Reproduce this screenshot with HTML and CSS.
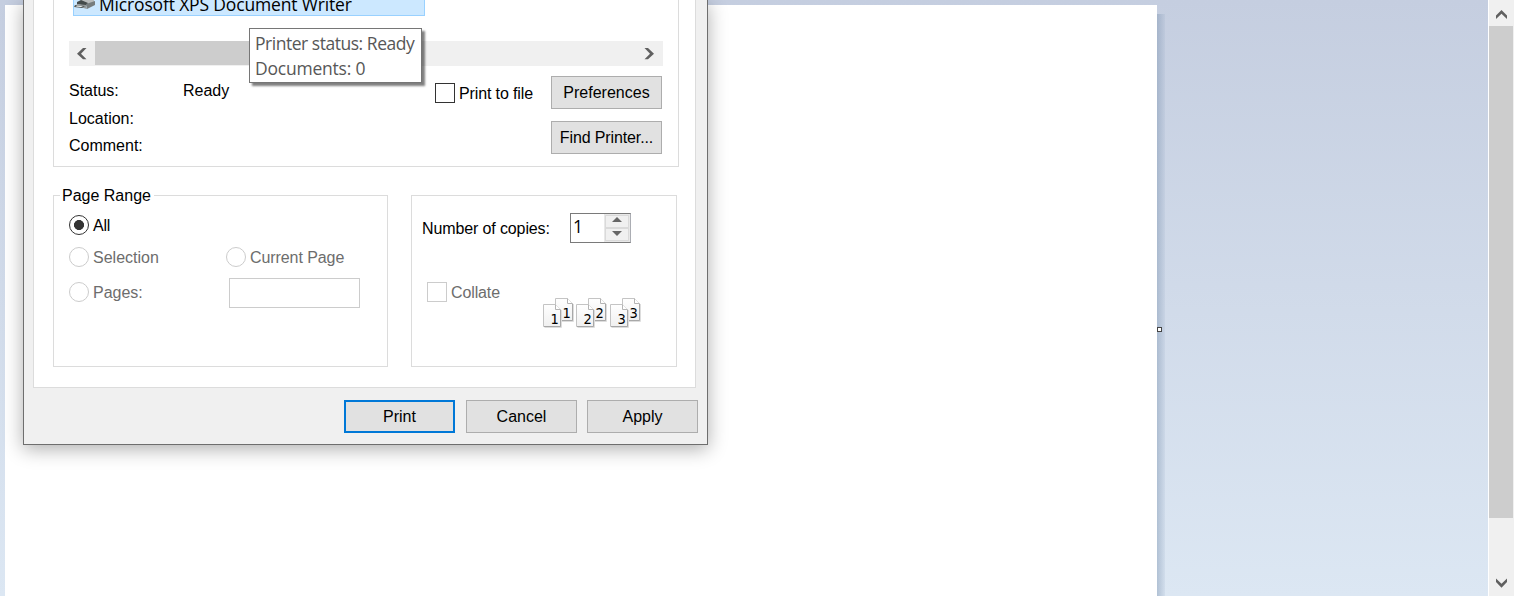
FILE: index.html
```html
<!DOCTYPE html>
<html lang="en">
<head>
<meta charset="utf-8">
<title>Print</title>
<link rel="stylesheet" href="styles.css">
</head>
<body>
<div class="app">
  <main class="workspace">
    <div class="paper"></div>
    <div class="paper-shadow"></div>
    <span class="handle"></span>
  </main>
  <div class="vscroll">
    <svg class="vscroll-btn" viewBox="0 0 24 26"><path d="M7 19v-3.500l5.500-5.500 5.500 5.500v3.500l-5.500-5.300z" fill="#606060"/></svg>
    <div class="vscroll-thumb"></div>
    <svg class="vscroll-btn vscroll-down" viewBox="0 0 24 26"><path d="M7 8.500v3.500l5.500 5.700 5.500-5.700v-3.500l-5.500 5.300z" fill="#606060"/></svg>
  </div>

  <section class="dialog">
    <div class="panel">
      <div class="group printer-group">
        <div class="list-item">
          <svg class="printer-icon" viewBox="0 0 22 12" width="22" height="12">
            <path d="M7 0H20V2L13 4 6 2Z" fill="#b9bcbc"/>
            <path d="M3 2 7 0 14 3 12 6 3 4Z" fill="#454b4b"/>
            <path d="M12 4 21 1V5L13 9Z" fill="#777d7e"/>
            <path d="M3 4 12 5 13 9 2 6Z" fill="#969b9c"/>
            <path d="M1 5 11 6 8 8 0 7Z" fill="#555b5b"/>
            <path d="M3 5.500 9 6 7 7 2 6.500Z" fill="#f1f4f4"/>
          </svg>
          <span class="item-name">Microsoft XPS Document Writer</span>
        </div>
        <div class="hscroll">
          <svg class="hscroll-btn" viewBox="0 0 26 25"><path d="M17.500 7H14l-6 5.700 6 5.500h3.500L12 12.700z" fill="#606060"/></svg>
          <div class="hscroll-thumb"></div>
          <svg class="hscroll-btn hscroll-right" viewBox="0 0 26 25"><path d="M7.500 7H11l6 5.700-6 5.500H7.500l5.500-5.500z" fill="#606060"/></svg>
        </div>
        <div class="details">
          <dl class="info">
            <dt>Status:</dt><dd>Ready</dd>
            <dt>Location:</dt><dd></dd>
            <dt>Comment:</dt><dd></dd>
          </dl>
          <label class="choice to-file"><span class="box"></span><span class="choice-text t-file">Print to file</span></label>
          <div class="side-buttons">
            <button class="btn t-pref">Preferences</button>
            <button class="btn t-find">Find Printer...</button>
          </div>
        </div>
      </div>
      <div class="groups">
        <div class="group range-group">
          <div class="legend">Page Range</div>
          <label class="choice all"><span class="radio checked"></span><span class="choice-text t-all">All</span></label>
          <div class="range-row">
            <label class="choice disabled"><span class="radio"></span><span class="choice-text">Selection</span></label>
            <label class="choice disabled current"><span class="radio"></span><span class="choice-text t-current">Current Page</span></label>
          </div>
          <div class="range-row pages-row">
            <label class="choice disabled pages"><span class="radio"></span><span class="choice-text">Pages:</span></label>
            <span class="pages-field"></span>
          </div>
        </div>
        <div class="group copies-group">
          <div class="copies-row">
            <span class="t-copies">Number of copies:</span>
            <div class="spinner">
              <span class="spin-value">1</span>
              <div class="spin-buttons">
                <span class="spin"><svg viewBox="0 0 10 5" width="10" height="5"><path d="M0 5 5 0 10 5Z" fill="#666"/></svg></span>
                <span class="spin"><svg viewBox="0 0 10 5" width="10" height="5"><path d="M0 0 5 5 10 0Z" fill="#666"/></svg></span>
              </div>
            </div>
          </div>
          <div class="collate-row">
            <label class="choice disabled"><span class="box"></span><span class="choice-text t-collate">Collate</span></label>
            <svg class="sheets" viewBox="0 0 100 32" width="100" height="32">
              <defs>
                <linearGradient id="sheet" x1="0" y1="0" x2="0" y2="1"><stop offset="0" stop-color="#fff"/><stop offset="1" stop-color="#f0f0f0"/></linearGradient>
                <g id="leaf">
                  <path d="M1.500 23.500H18.500V6" fill="none" stroke="#ddd"/>
                  <path d="M.5.500H12.500L17.500 5.500V22.500H.5Z" fill="url(#sheet)" stroke="#c4c4c4"/>
                  <path d="M1 22.500H17.500V6" fill="none" stroke="#a8a8a8"/>
                  <path d="M12.500.500V5.500H17.500" fill="#fff" stroke="#b4b4b4"/>
                </g>
              </defs>
              <use href="#leaf" x="12" y="1"/><text class="sheet-no" x="19.500" y="21">1</text>
              <use href="#leaf" y="7"/><text class="sheet-no" x="7.500" y="27">1</text>
              <use href="#leaf" x="45" y="1"/><text class="sheet-no" x="52.500" y="21">2</text>
              <use href="#leaf" x="33" y="7"/><text class="sheet-no" x="40.500" y="27">2</text>
              <use href="#leaf" x="79" y="1"/><text class="sheet-no" x="86.500" y="21">3</text>
              <use href="#leaf" x="67" y="7"/><text class="sheet-no" x="74.500" y="27">3</text>
            </svg>
          </div>
        </div>
      </div>
    </div>
    <div class="actions">
      <button class="btn primary">Print</button>
      <button class="btn cancel">Cancel</button>
      <button class="btn">Apply</button>
    </div>
  </section>
  <div class="tooltip"><div class="tip-a">Printer status: Ready</div><div class="tip-b">Documents: 0</div></div>
</div>
</body>
</html>
```

FILE: styles.css
```css
* { box-sizing: border-box; }
html, body { margin: 0; height: 100%; overflow: hidden; }
body { font: 16px/20px "Liberation Sans", Arial, sans-serif; color: #000; }
svg { display: block; }

.app { position: relative; display: flex; width: 1514px; height: 596px; overflow: hidden; }

.workspace {
  position: relative; display: flex; flex: 1; padding: 5px 0 0 5px;
  background: linear-gradient(#c5cee0, #dce7f3);
}
.paper { width: 1152px; background: #fff; }
.paper-shadow { width: 8px; margin-top: 9px; background: linear-gradient(90deg, rgba(125,148,176,.45), rgba(140,160,190,.12)); }
.handle { position: absolute; left: 1157px; top: 327px; width: 5px; height: 5px; background: #fff; border: 1px solid #444; }

.vscroll { display: flex; flex-direction: column; width: 26px; padding-right: 1px; border-left: 1px solid #fff; background: #f0f0f0; }
.vscroll-btn { width: 24px; height: 26px; flex: none; }
.vscroll-thumb { height: 492px; background: #cdcdcd; }
.vscroll-down { margin-top: auto; }

.dialog {
  position: absolute; left: 23px; top: 0; width: 685px; height: 445px;
  padding: 0 9px; background: #f0f0f0; border: 1px solid #6e6e6e; border-top: 0;
  box-shadow: 0 4px 18px rgba(0,0,0,.32);
}
.panel { width: 663px; height: 388px; padding-left: 19px; background: #fff; border: 1px solid #dcdcdc; border-top: 0; }
.group { border: 1px solid #dcdcdc; }
.printer-group { width: 626px; height: 167px; border-top: 0; padding-left: 15px; }

.list-item { display: flex; width: 352px; height: 16px; margin-left: 4px; background: #cce8ff; border: 1px solid #99d1ff; border-top: 0; }
.printer-icon { flex: none; }
.item-name { margin: -8px 0 0 3px; height: 24px; font: 17.500px/24px "Open Sans", "Noto Sans", sans-serif; letter-spacing: -.16px; white-space: nowrap; }

.hscroll { display: flex; width: 594px; height: 25px; margin-top: 25px; background: #f0f0f0; }
.hscroll-btn { width: 26px; height: 25px; flex: none; }
.hscroll-thumb { width: 200px; height: 24px; background: #cdcdcd; }
.hscroll-right { margin-left: auto; }

.details { display: flex; padding-top: 10px; }
.info { display: grid; grid-template-columns: 114px 252px; grid-template-rows: 28px 27px 27px; align-content: start; margin: 5px 0 0; }
.info dd { margin: 0; }
.choice { display: flex; align-items: center; gap: 4px; height: 20px; white-space: nowrap; }
.choice-text { padding-top: 2px; }
.disabled { color: #6d6d6d; }
.box { width: 20px; height: 20px; border: 1px solid #333; background: #fff; }
.disabled .box { border-color: #ccc; }
.to-file { width: 116px; margin-top: 7px; }
.t-file { letter-spacing: -.13px; }
.t-current { letter-spacing: -.08px; }
.t-collate { letter-spacing: -.12px; }
.side-buttons { display: flex; flex-direction: column; gap: 12px; }
.btn { width: 111px; height: 33px; padding: 0; border: 1px solid #adadad; border-radius: 0; background: #e1e1e1; color: #000; font: inherit; white-space: nowrap; }
.t-find { letter-spacing: -.12px; }
.primary { border: 2px solid #0078d7; }

.groups { display: flex; gap: 23px; margin-top: 28px; }
.range-group { width: 335px; height: 172px; padding-left: 15px; }
.legend { width: 94px; height: 20px; margin: -10px 0 0 -9px; padding-left: 2px; background: #fff; white-space: nowrap; }
.all { margin-top: 9px; }
.t-all { letter-spacing: -.2px; }
.radio { width: 20px; height: 20px; border: 1px solid #ccc; border-radius: 50%; }
.checked { border-color: #333; background: radial-gradient(circle, #333 4.700px, #fff 5.300px); }
.range-row { display: grid; grid-template-columns: 157px 1fr; margin-top: 12px; }
.pages-row { grid-template-columns: 160px 131px; align-items: start; margin-top: 11px; }
.pages { margin-top: 4px; }
.pages-field { height: 30px; border: 1px solid #ccc; }

.copies-group { width: 266px; height: 172px; padding: 17px 0 0 10px; }
.copies-row { display: flex; align-items: center; }
.t-copies { width: 148px; padding-top: 2px; letter-spacing: -.12px; white-space: nowrap; }
.spinner { display: flex; width: 61px; height: 30px; border: 1px solid #7a7a7a; border-right-color: #abadb3; background: #fff; }
.spin-value { flex: 1; padding: 1px 0 0 2px; font: 17.500px/22px "Open Sans", "Noto Sans", sans-serif; }
.spin-buttons { display: flex; flex-direction: column; width: 26px; padding: 1px; background: #e8e8e8; }
.spin { display: flex; flex: 1; align-items: flex-start; padding: 1px 1px 0 0; justify-content: center; background: #f0f0f0; border: 1px solid #dadada; }
.spin + .spin { padding-top: 2px; }
.collate-row { display: flex; margin: 39px 0 0 5px; }
.collate-row .choice { width: 116px; }
.sheets { margin-top: 15px; }
.sheet-no { font: 14.500px "DejaVu Sans Condensed", "DejaVu Sans", sans-serif; fill: #000; }

.actions { display: flex; margin: 12px 0 0 311px; }
.cancel { margin: 0 10px 0 11px; }

.tooltip {
  position: absolute; left: 249px; top: 28px; width: 173px; height: 55px; padding: 2px 0 0 5px;
  border: 1px solid #767676; background: #fff; color: #575757; box-shadow: 3px 3px 2px rgba(0,0,0,.5);
  font: 17.500px/25px "Open Sans", "Noto Sans", sans-serif; letter-spacing: -.47px; white-space: nowrap;
}
.tip-b { letter-spacing: -.22px; }
```
